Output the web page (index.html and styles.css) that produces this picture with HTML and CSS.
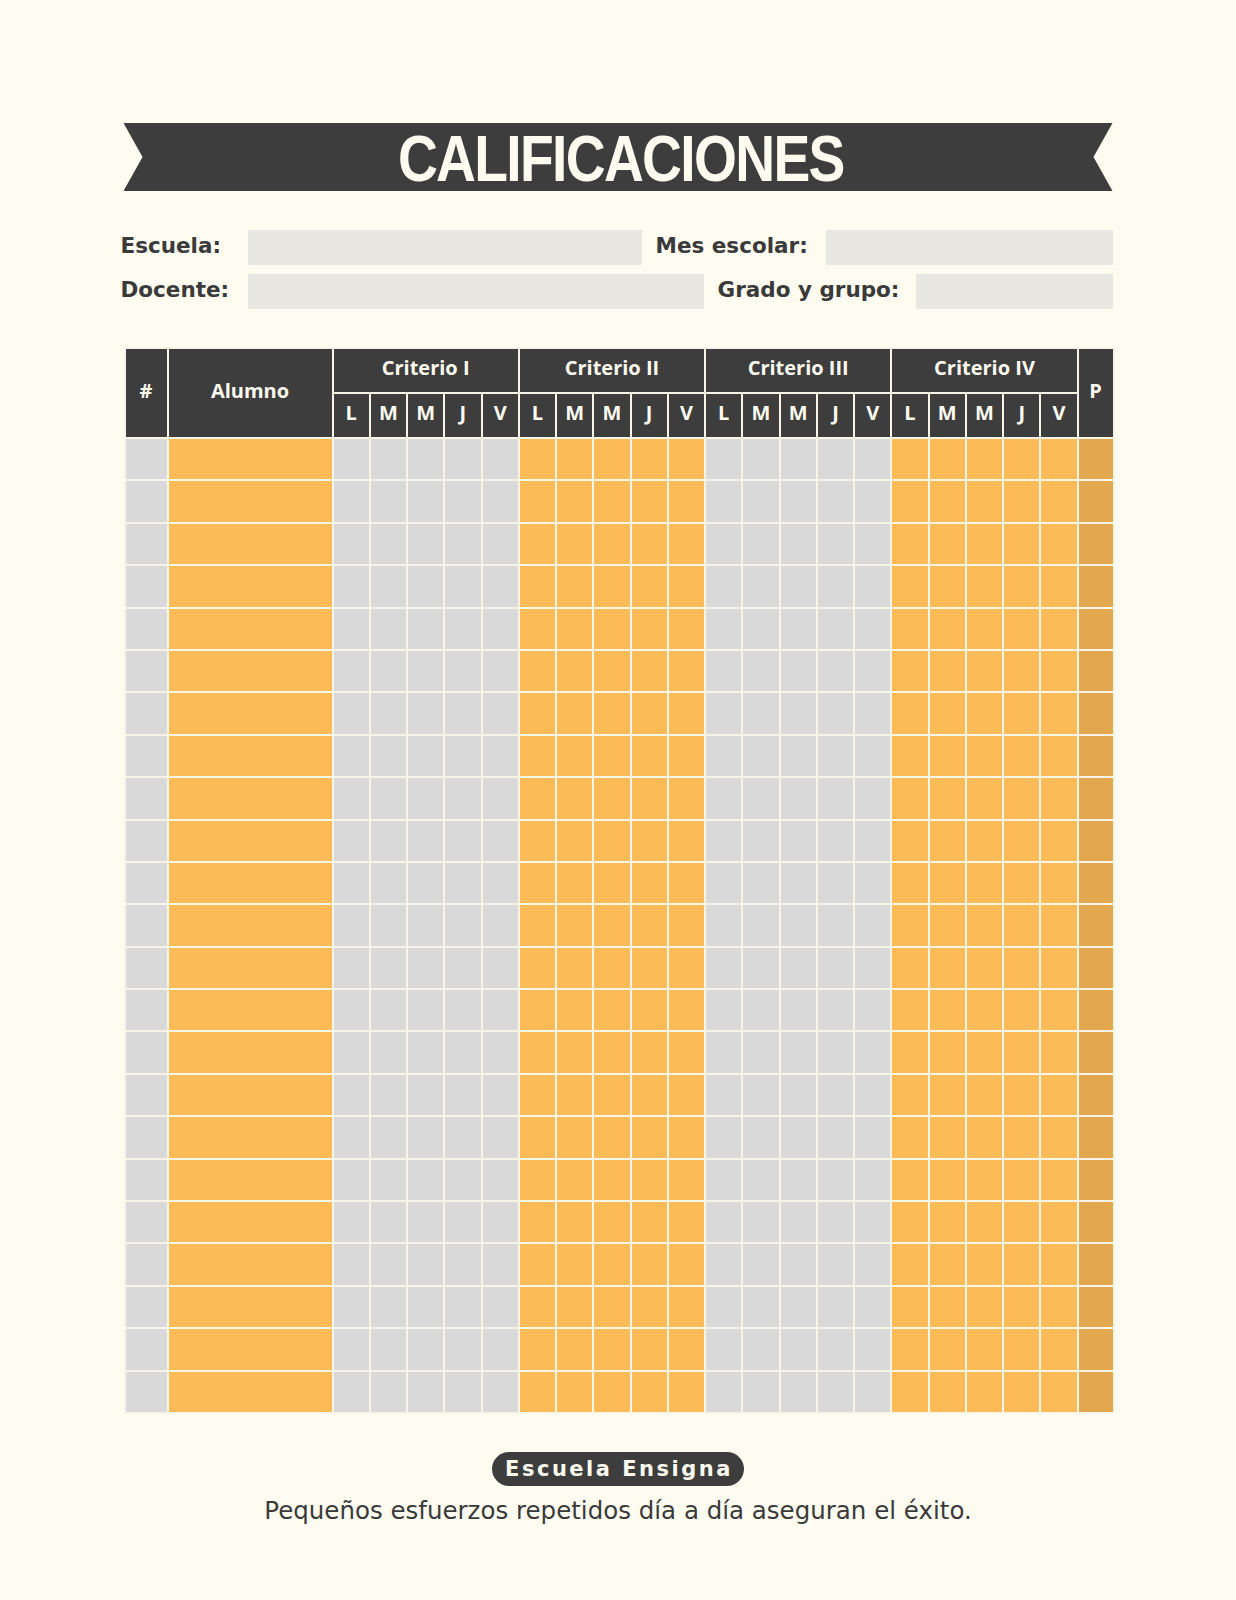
FILE: index.html
```html
<!DOCTYPE html>
<html lang="es">
<head>
<meta charset="utf-8">
<title>Calificaciones</title>
<link rel="stylesheet" href="styles.css">
</head>
<body>
<div class="page">
  <div class="banner"><h1 class="title">CALIFICACIONES</h1></div>

  <div class="fields">
    <div class="frow">
      <span class="lbl lbl-a">Escuela:</span>
      <span class="field f-escuela"></span>
      <span class="lbl lbl-mes">Mes escolar:</span>
      <span class="field grow"></span>
    </div>
    <div class="frow">
      <span class="lbl lbl-a">Docente:</span>
      <span class="field f-docente"></span>
      <span class="lbl lbl-grado">Grado y grupo:</span>
      <span class="field grow"></span>
    </div>
  </div>

  <table class="grades">
    <colgroup>
      <col class="c-num g"><col class="c-name o">
      <col class="c-d g"><col class="c-d g"><col class="c-d g"><col class="c-d g"><col class="c-d g">
      <col class="c-d o"><col class="c-d o"><col class="c-d o"><col class="c-d o"><col class="c-d o">
      <col class="c-d g"><col class="c-d g"><col class="c-d g"><col class="c-d g"><col class="c-d g">
      <col class="c-d o"><col class="c-d o"><col class="c-d o"><col class="c-d o"><col class="c-d o">
      <col class="c-p p">
    </colgroup>
    <thead>
      <tr class="h1">
        <th rowspan="2">#</th>
        <th rowspan="2">Alumno</th>
        <th colspan="5">Criterio I</th>
        <th colspan="5">Criterio II</th>
        <th colspan="5">Criterio III</th>
        <th colspan="5">Criterio IV</th>
        <th rowspan="2">P</th>
      </tr>
      <tr class="h2">
        <th>L</th><th>M</th><th>M</th><th>J</th><th>V</th>
        <th>L</th><th>M</th><th>M</th><th>J</th><th>V</th>
        <th>L</th><th>M</th><th>M</th><th>J</th><th>V</th>
        <th>L</th><th>M</th><th>M</th><th>J</th><th>V</th>
      </tr>
    </thead>
    <tbody>
      <tr><td></td><td></td><td></td><td></td><td></td><td></td><td></td><td></td><td></td><td></td><td></td><td></td><td></td><td></td><td></td><td></td><td></td><td></td><td></td><td></td><td></td><td></td><td></td></tr>
      <tr><td></td><td></td><td></td><td></td><td></td><td></td><td></td><td></td><td></td><td></td><td></td><td></td><td></td><td></td><td></td><td></td><td></td><td></td><td></td><td></td><td></td><td></td><td></td></tr>
      <tr><td></td><td></td><td></td><td></td><td></td><td></td><td></td><td></td><td></td><td></td><td></td><td></td><td></td><td></td><td></td><td></td><td></td><td></td><td></td><td></td><td></td><td></td><td></td></tr>
      <tr><td></td><td></td><td></td><td></td><td></td><td></td><td></td><td></td><td></td><td></td><td></td><td></td><td></td><td></td><td></td><td></td><td></td><td></td><td></td><td></td><td></td><td></td><td></td></tr>
      <tr><td></td><td></td><td></td><td></td><td></td><td></td><td></td><td></td><td></td><td></td><td></td><td></td><td></td><td></td><td></td><td></td><td></td><td></td><td></td><td></td><td></td><td></td><td></td></tr>
      <tr><td></td><td></td><td></td><td></td><td></td><td></td><td></td><td></td><td></td><td></td><td></td><td></td><td></td><td></td><td></td><td></td><td></td><td></td><td></td><td></td><td></td><td></td><td></td></tr>
      <tr><td></td><td></td><td></td><td></td><td></td><td></td><td></td><td></td><td></td><td></td><td></td><td></td><td></td><td></td><td></td><td></td><td></td><td></td><td></td><td></td><td></td><td></td><td></td></tr>
      <tr><td></td><td></td><td></td><td></td><td></td><td></td><td></td><td></td><td></td><td></td><td></td><td></td><td></td><td></td><td></td><td></td><td></td><td></td><td></td><td></td><td></td><td></td><td></td></tr>
      <tr><td></td><td></td><td></td><td></td><td></td><td></td><td></td><td></td><td></td><td></td><td></td><td></td><td></td><td></td><td></td><td></td><td></td><td></td><td></td><td></td><td></td><td></td><td></td></tr>
      <tr><td></td><td></td><td></td><td></td><td></td><td></td><td></td><td></td><td></td><td></td><td></td><td></td><td></td><td></td><td></td><td></td><td></td><td></td><td></td><td></td><td></td><td></td><td></td></tr>
      <tr><td></td><td></td><td></td><td></td><td></td><td></td><td></td><td></td><td></td><td></td><td></td><td></td><td></td><td></td><td></td><td></td><td></td><td></td><td></td><td></td><td></td><td></td><td></td></tr>
      <tr><td></td><td></td><td></td><td></td><td></td><td></td><td></td><td></td><td></td><td></td><td></td><td></td><td></td><td></td><td></td><td></td><td></td><td></td><td></td><td></td><td></td><td></td><td></td></tr>
      <tr><td></td><td></td><td></td><td></td><td></td><td></td><td></td><td></td><td></td><td></td><td></td><td></td><td></td><td></td><td></td><td></td><td></td><td></td><td></td><td></td><td></td><td></td><td></td></tr>
      <tr><td></td><td></td><td></td><td></td><td></td><td></td><td></td><td></td><td></td><td></td><td></td><td></td><td></td><td></td><td></td><td></td><td></td><td></td><td></td><td></td><td></td><td></td><td></td></tr>
      <tr><td></td><td></td><td></td><td></td><td></td><td></td><td></td><td></td><td></td><td></td><td></td><td></td><td></td><td></td><td></td><td></td><td></td><td></td><td></td><td></td><td></td><td></td><td></td></tr>
      <tr><td></td><td></td><td></td><td></td><td></td><td></td><td></td><td></td><td></td><td></td><td></td><td></td><td></td><td></td><td></td><td></td><td></td><td></td><td></td><td></td><td></td><td></td><td></td></tr>
      <tr><td></td><td></td><td></td><td></td><td></td><td></td><td></td><td></td><td></td><td></td><td></td><td></td><td></td><td></td><td></td><td></td><td></td><td></td><td></td><td></td><td></td><td></td><td></td></tr>
      <tr><td></td><td></td><td></td><td></td><td></td><td></td><td></td><td></td><td></td><td></td><td></td><td></td><td></td><td></td><td></td><td></td><td></td><td></td><td></td><td></td><td></td><td></td><td></td></tr>
      <tr><td></td><td></td><td></td><td></td><td></td><td></td><td></td><td></td><td></td><td></td><td></td><td></td><td></td><td></td><td></td><td></td><td></td><td></td><td></td><td></td><td></td><td></td><td></td></tr>
      <tr><td></td><td></td><td></td><td></td><td></td><td></td><td></td><td></td><td></td><td></td><td></td><td></td><td></td><td></td><td></td><td></td><td></td><td></td><td></td><td></td><td></td><td></td><td></td></tr>
      <tr><td></td><td></td><td></td><td></td><td></td><td></td><td></td><td></td><td></td><td></td><td></td><td></td><td></td><td></td><td></td><td></td><td></td><td></td><td></td><td></td><td></td><td></td><td></td></tr>
      <tr><td></td><td></td><td></td><td></td><td></td><td></td><td></td><td></td><td></td><td></td><td></td><td></td><td></td><td></td><td></td><td></td><td></td><td></td><td></td><td></td><td></td><td></td><td></td></tr>
      <tr><td></td><td></td><td></td><td></td><td></td><td></td><td></td><td></td><td></td><td></td><td></td><td></td><td></td><td></td><td></td><td></td><td></td><td></td><td></td><td></td><td></td><td></td><td></td></tr>
    </tbody>
  </table>

  <footer class="foot">
    <span class="pill">Escuela Ensigna</span>
    <p class="tagline">Pequeños esfuerzos repetidos día a día aseguran el éxito.</p>
  </footer>
</div>
</body>
</html>
```

FILE: styles.css
```css
html, body {
  margin: 0;
  padding: 0;
  background: #fefcf0;
}

.page {
  width: 989px;
  margin: 0 auto;
  padding-top: 123px;
  color: #3a3a3a;
}

/* Banner */
.banner {
  height: 68px;
  background: #3d3d3d;
  clip-path: polygon(0 0, 100% 0, calc(100% - 19px) 50%, 100% 100%, 0 100%, 19px 50%);
  display: flex;
  align-items: center;
  justify-content: center;
}

.title {
  margin: 0;
  font-family: "Liberation Sans", Arial, sans-serif;
  font-weight: 700;
  font-size: 65px;
  line-height: 1;
  letter-spacing: -2px;
  color: #fdfbf0;
  transform: scaleX(0.85);
  padding-top: 2px;
  padding-left: 6px;
}

/* Fields */
.fields {
  margin-top: 39px;
  display: flex;
  flex-direction: column;
  gap: 9px;
}

.frow {
  display: flex;
  align-items: center;
  height: 35px;
}

.lbl {
  font-family: "DejaVu Sans", Verdana, sans-serif;
  font-weight: 700;
  font-size: 21.5px;
  color: #3a3a3a;
  white-space: nowrap;
  padding-bottom: 4px;
}

.lbl-a { width: 124px; margin-left: -3px; padding-right: 3px; }
.lbl-mes { width: 170px; margin-left: 14px; }
.lbl-grado { width: 198px; margin-left: 14px; }

.field {
  display: block;
  height: 35px;
  background: #e8e7e1;
}
.f-escuela { width: 394px; }
.f-docente { width: 456px; }
.grow { flex: 1; }

/* Table */
.grades {
  margin-top: 38px;
  width: 989px;
  table-layout: fixed;
  border-collapse: collapse;
}

.c-num { width: 43px; }
.c-name { width: 165px; }
.c-d { width: 37.25px; }
.c-p { width: 36px; }

col.g { background: #d9d9d9; }
col.o { background: #fdbb57; }
col.p { background: #e2a74f; }

.grades th,
.grades td {
  border: 2px solid #f7f4e8;
  padding: 0;
}

.grades th {
  background: #3d3d3d;
  color: #fdfbf0;
  font-family: "Open Sans", "Noto Sans", sans-serif;
  font-weight: 700;
  font-size: 20px;
  line-height: 24px;
  text-align: center;
  vertical-align: middle;
  padding-bottom: 5px;
}

.grades thead tr { height: 45px; }
.grades tbody tr { height: 42.4px; }

/* Footer */
.foot {
  margin-top: 38px;
  display: flex;
  flex-direction: column;
  align-items: center;
}

.pill {
  display: inline-block;
  background: #3d3d3d;
  color: #fdfbf0;
  font-family: "DejaVu Sans", Verdana, sans-serif;
  font-weight: 700;
  font-size: 21px;
  letter-spacing: 2.5px;
  line-height: 34px;
  height: 34px;
  padding: 0 11px 0 13px;
  border-radius: 17px;
}

.tagline {
  margin: 10px 0 0;
  font-family: "DejaVu Sans", Verdana, sans-serif;
  font-size: 24.5px;
  line-height: 30px;
  color: #3a3a3a;
}
```
